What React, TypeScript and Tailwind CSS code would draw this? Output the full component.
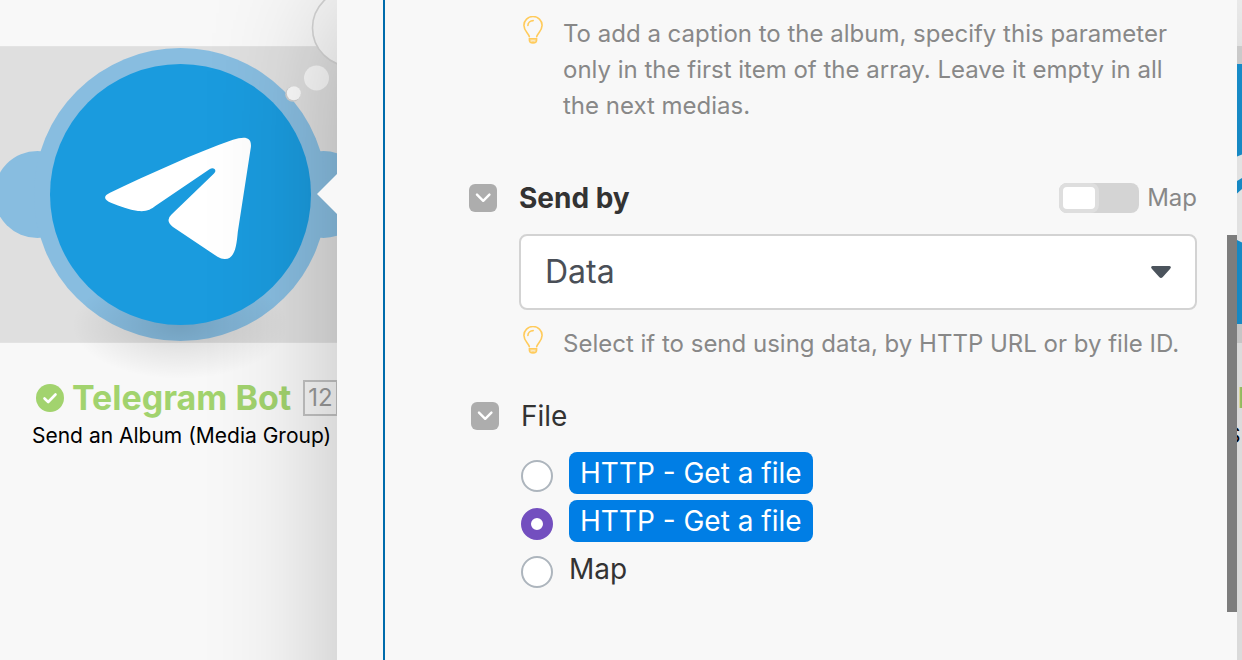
import { useState } from "react";
import type { ReactNode } from "react";

function Bulb() {
  return (
    <svg className="w-5 h-7 shrink-0" viewBox="0 0 20 28" fill="none" stroke="#ffcb5b" strokeWidth="1.6" strokeLinecap="round">
      <path d="M6.3 20.6C5.6 17 0.9 15 0.9 9.3A9.1 8.8 0 0 1 19.1 9.3C19.1 15 14.4 17 13.7 20.6" />
      <path d="M4.9 9.4A5.4 4.9 0 0 1 10.2 4.6" />
      <path d="M6.4 22.9H13.6C14 26 12.4 26.9 10 26.9S6 26 6.4 22.9Z" />
      <path d="M7.6 24.8C9 25.4 11 25.4 12.4 24.8" strokeWidth="1" />
    </svg>
  );
}

function Hint({ children }: { children: ReactNode }) {
  return (
    <div className="flex items-start gap-5 pl-1">
      <Bulb />
      <p className="text-2xl leading-9 text-[#888888]">{children}</p>
    </div>
  );
}

function CollapseButton({ label }: { label: string }) {
  return (
    <button type="button" aria-label={label} className="w-7 h-7 shrink-0 rounded-md bg-[#adadad] flex items-center justify-center">
      <svg className="w-4 h-4" viewBox="0 0 16 16" fill="none" stroke="#fff" strokeWidth="2.4" strokeLinecap="round" strokeLinejoin="round">
        <path d="M2 4.6L8.2 10.8L14.4 4.6" />
      </svg>
    </button>
  );
}

function ModuleArt() {
  return (
    <svg className="block w-[337px] h-[378px]" viewBox="0 0 337 378">
      <defs>
        <radialGradient id="ground">
          <stop offset="0" stopColor="#000" stopOpacity="0.15" />
          <stop offset="0.5" stopColor="#000" stopOpacity="0.07" />
          <stop offset="1" stopColor="#000" stopOpacity="0" />
        </radialGradient>
      </defs>
      <rect x="0" y="46" width="337" height="297" fill="#e3e3e3" />
      <rect x="0" y="47" width="337" height="295" fill="#dfdfdf" />
      <g fill="#88bde0">
        <circle cx="37.5" cy="194.5" r="43.5" />
        <circle cx="323.5" cy="194.5" r="43.5" />
        <circle cx="180.5" cy="194.5" r="146.5" />
      </g>
      <ellipse cx="180" cy="325" rx="108" ry="54" fill="url(#ground)" />
      <circle cx="180.5" cy="194.5" r="130.5" fill="#1a9bde" />
      <path
        fill="#fff"
        d="M110 192.7C150 174 195 153 233 139.8C243 136.8 251.8 135.5 250.9 147L237.8 232C236.5 247 234.5 259 225 259Q221.5 259.2 217.5 256.8L173 227Q164.8 220.5 171.5 214.5L214 173.6C217.5 170 213.5 166.5 209.5 169.3L156 205.5C150.5 209.6 147 211.8 138 211C129 209.8 120 206.3 111.5 203C103.5 200 103 195.8 110 192.7Z"
      />
      <circle cx="350.5" cy="28" r="38" fill="#f8f8f8" stroke="#d4d4d4" strokeWidth="1.6" />
      <circle cx="316.5" cy="78" r="12.5" fill="#f8f8f8" />
      <circle cx="292.8" cy="94.2" r="7.6" fill="#cfcfcf" />
      <circle cx="293.8" cy="93.3" r="7" fill="#fcfcfc" />
    </svg>
  );
}

function ModuleCard() {
  return (
    <div className="w-[337px] shrink-0 overflow-hidden">
      <ModuleArt />
      <div className="flex items-center h-10 pl-9 whitespace-nowrap">
        <svg className="w-7 h-7 shrink-0" viewBox="0 0 28 28" fill="none">
          <circle cx="14" cy="14" r="14" fill="#a2d36e" />
          <path d="M8.5 14.5L12.2 18L19.5 10.5" stroke="#fff" strokeWidth="2.6" strokeLinecap="round" strokeLinejoin="round" />
        </svg>
        <h2 className="ml-2 text-[34px] leading-9 font-bold text-[#a2d36e]">Telegram Bot</h2>
        <span className="ml-3 px-[3px] h-9 border-2 border-[#c3c3c3] text-2xl leading-8 text-[#999999]">12</span>
      </div>
      <p className="pl-8 text-[21px] leading-9 text-black whitespace-nowrap">Send an Album (Media Group)</p>
    </div>
  );
}

function NextModule() {
  return (
    <div className="w-[5px] shrink-0 overflow-hidden">
      <svg className="block w-[5px] h-[378px]" viewBox="0 0 5 378">
        <rect y="46" width="5" height="297" fill="#dfdfdf" />
        <rect y="64" width="5" height="260" fill="#1a9bde" />
        <path fill="#fff" d="M0 156.5L5 154.5V178L0 181Z" />
        <path fill="#fff" d="M0 193.5L5 189V242.5L0 240Z" />
      </svg>
      <h2 className="pl-px text-[28px] leading-10 font-bold text-[#a2d36e]">HTTP</h2>
      <p className="-ml-[10px] text-[21px] leading-9 text-black">S</p>
    </div>
  );
}

const FILES = [
  { id: "http-1", label: "HTTP - Get a file", tag: true },
  { id: "http-2", label: "HTTP - Get a file", tag: true },
  { id: "map", label: "Map", tag: false },
];

export default function App() {
  const [file, setFile] = useState("http-2");
  const [mapped, setMapped] = useState(false);

  return (
    <div className="h-screen overflow-hidden flex items-start bg-[#f8f8f8] font-['Inter',sans-serif]">
      <ModuleCard />

      <main className="relative z-10 flex-1 min-w-0 flex items-start bg-[#f8f8f8] shadow-[0_0_120px_rgba(0,0,0,0.24)]">
        {/* pointer towards the module */}
        <svg className="absolute right-full top-[174px] w-5 h-10" viewBox="0 0 20 40">
          <path d="M20 0V40L0 20Z" fill="#f8f8f8" />
        </svg>

        <div className="flex-1 min-w-0 ml-[46px] pl-[84px] pr-[30px] pt-4 pb-[260px] border-l-2 border-[#006cac]">
          <div className="pl-[50px]">
            <Hint>
              To add a caption to the album, specify this parameter only in the first item of the array. Leave it empty in all the next medias.
            </Hint>
          </div>

          <div className="mt-14 flex items-center h-9">
            <CollapseButton label="Collapse Send by" />
            <label htmlFor="send-by" className="ml-[22px] text-[28px] leading-9 font-bold text-[#333333]">Send by</label>
            <label className="ml-auto flex items-center gap-2 text-2xl text-[#888888]">
              <input
                type="checkbox"
                role="switch"
                checked={mapped}
                onChange={(e) => setMapped(e.target.checked)}
                className="appearance-none flex w-20 h-[30px] rounded-lg bg-[#d4d4d4] before:block before:w-10 before:h-[30px] before:rounded-lg before:border-4 before:border-[#dedede] before:bg-white checked:before:ml-10"
              />
              Map
            </label>
          </div>

          <div className="pl-[50px]">
            <div className="relative mt-[18px]">
              <select id="send-by" className="block w-full h-[76px] appearance-none rounded-lg border-2 border-[#d3d3d3] bg-white px-6 text-[32px] text-[#4a4f57]">
                <option>Data</option>
                <option>HTTP URL</option>
                <option>File ID</option>
              </select>
              <svg className="absolute right-[26px] top-8 w-5 h-3 pointer-events-none" viewBox="0 0 20 12">
                <path d="M1.5 0H18.5Q21 0.8 19 3L11.8 11Q10 12.8 8.2 11L1 3Q-1 0.8 1.5 0Z" fill="#4b535c" />
              </svg>
            </div>
            <div className="mt-4">
              <Hint>Select if to send using data, by HTTP URL or by file ID.</Hint>
            </div>
          </div>

          <fieldset className="mt-9 pl-[2px]">
            <legend className="flex items-center h-9">
              <CollapseButton label="Collapse File" />
              <span className="ml-[22px] text-[28px] leading-9 text-[#333333]">File</span>
            </legend>
            <div className="mt-[18px] pl-[50px] flex flex-col items-start gap-[6px]">
              {FILES.map((f) => (
                <label key={f.id} className="flex items-end gap-4 text-[28px] leading-[42px]">
                  <input
                    type="radio"
                    name="file"
                    value={f.id}
                    checked={file === f.id}
                    onChange={() => setFile(f.id)}
                    className="appearance-none shrink-0 w-8 h-8 mb-[2px] rounded-full border-2 border-[#adb5bd] bg-white checked:border-[10px] checked:border-[#734fbf]"
                  />
                  <span className={f.tag ? "px-[11px] rounded-lg bg-[#007ee5] text-white" : "text-[#333333]"}>{f.label}</span>
                </label>
              ))}
            </div>
          </fieldset>
        </div>

        <div className="w-[10px] shrink-0 pt-[235px]">
          <div className="h-[377px] bg-[#7d7d7d]" />
        </div>
      </main>

      <NextModule />
    </div>
  );
}
